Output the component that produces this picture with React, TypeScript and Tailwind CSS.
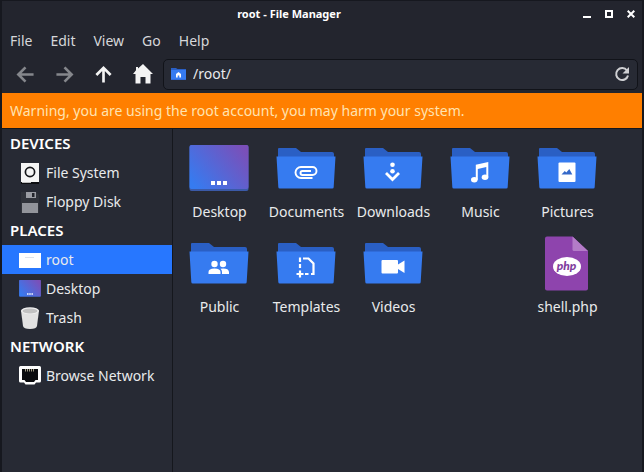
import React from "react";

const menus = ["File", "Edit", "View", "Go", "Help"];

function Folder({ children }: { children: React.ReactNode }) {
  return (
    <svg viewBox="1 0 64 64" className="size-16" aria-hidden="true">
      <path d="M5 12h17l5 4h31q2 0 2 2v10H4V13q0-1 1-1z" fill="#2a5fc4" />
      <path d="M2.500 20.500h59l-1.800 30.500q0 1.500-1.500 1.500H5.800q-1.500 0-1.500-1.500z" fill="#367bf0" />
      {children}
    </svg>
  );
}

function DesktopIcon({ small }: { small?: boolean }) {
  return (
    <svg viewBox={small ? "2 9 60 46" : "1 0 64 64"} className={small ? "h-[17px] w-[22px]" : "size-16"} aria-hidden="true">
      <defs>
        <linearGradient id={small ? "deskSmall" : "deskLarge"} x1="0" y1="0.8" x2="1" y2="0.2">
          <stop offset="0" stopColor="#367bf0" />
          <stop offset="1" stopColor="#7b4fb8" />
        </linearGradient>
      </defs>
      <rect x="2.500" y="9" width="59" height="46" rx="2" fill="#3b5aa8" />
      <rect x="2.500" y="9" width="59" height="44" rx="2" fill={small ? "url(#deskSmall)" : "url(#deskLarge)"} />
      <path d="M24 45h4v4h-4zM30 45h4v4h-4zM36 45h4v4h-4z" fill="#fff" />
    </svg>
  );
}

const DocumentsIcon = () => (
  <Folder>
    <path
      d="M38.500 42H27a5.500 5.500 0 0 1 0-11h11.500a4 4 0 0 1 0 8H28.500a2 2 0 0 1 0-4H37"
      fill="none" stroke="#fff" strokeWidth="1.900"
    />
  </Folder>
);

const DownloadsIcon = () => (
  <Folder>
    <circle cx="31.500" cy="28.800" r="2.300" fill="#fff" />
    <circle cx="31.500" cy="35.300" r="2.300" fill="#fff" />
    <path d="M25 37l6.500 6.500L38 37" fill="none" stroke="#fff" strokeWidth="2.800" />
  </Folder>
);

const MusicIcon = () => (
  <Folder>
    <ellipse cx="26.300" cy="43.700" rx="3.300" ry="2.700" fill="#fff" />
    <ellipse cx="37" cy="41.300" rx="3.300" ry="2.700" fill="#fff" />
    <path d="M27.800 28.700 40.300 26v15.300h-2V31l-8.500 2v10.700h-2z" fill="#fff" />
  </Folder>
);

const PicturesIcon = () => (
  <Folder>
    <rect x="23.500" y="26.500" width="17" height="19.500" rx="1" fill="#fff" />
    <path d="m26.500 38.500 3.300-3.500 1.500 1.500 3-3.500 3 5.500z" fill="#3569c9" />
  </Folder>
);

const PublicIcon = () => (
  <Folder>
    <circle cx="27.500" cy="33" r="3.200" fill="#fff" />
    <circle cx="36" cy="33" r="3.200" fill="#fff" />
    <path d="M21.500 43v-2q0-3.500 6-3.500t6 3.500v2zM35 43v-2q0-2-1.500-3.300 8-1 8.500 3.300v2z" fill="#fff" />
  </Folder>
);

const TemplatesIcon = () => (
  <Folder>
    <path d="M29 27.500h5.500l5 5V43H37" fill="none" stroke="#fff" strokeWidth="2.200" />
    <path d="M26 26.500v4.500M26 33v4M31 43h3.500M22.500 43h7M26 39.500v7" fill="none" stroke="#fff" strokeWidth="2.200" />
  </Folder>
);

const VideosIcon = () => (
  <Folder>
    <path d="M21.500 29q-1 0-1 1v11.500q0 1 1 1H36q1 0 1-1V38l6.500 4V29.500L37 33.500V30q0-1-1-1z" fill="#fff" />
  </Folder>
);

const PhpIcon = () => (
  <svg viewBox="1 0 64 64" className="size-16" aria-hidden="true">
    <path d="M12 5.500h25.500L53 20v37.500q0 2-2 2H12q-2 0-2-2v-50q0-2 2-2z" fill="#8e44ad" />
    <path d="M37.500 5.500 53 20H39q-1.500 0-1.500-1.500z" fill="#b47cc8" />
    <ellipse cx="32" cy="35.500" rx="14" ry="9.500" fill="#fff" />
    <text x="31.500" y="39" textAnchor="middle" fontFamily="Lato, sans-serif" fontSize="12" fontWeight="900" fontStyle="italic" fill="#7f3d9e">php</text>
  </svg>
);

const DriveIcon = () => (
  <svg viewBox="0 0 22 22" className="size-[22px]" aria-hidden="true">
    <path d="M2 1h18v19H2z" fill="#f5f5f5" />
    <circle cx="11" cy="10" r="4.600" fill="none" stroke="#15161a" strokeWidth="1.700" />
    <path d="M2 20h18v2H2z" fill="#0d0e11" />
    <path d="M3 20h9v1H3z" fill="#bbb" />
  </svg>
);

const FloppyIcon = () => (
  <svg viewBox="0 0 22 22" className="size-[22px]" aria-hidden="true">
    <path d="M2 1h15l3 3v18H2z" fill="#30333b" />
    <path d="M7 1h10v6H7z" fill="#9a9ca3" />
    <path d="M13 2h2.500v4H13z" fill="#22242b" />
    <path d="M3 12h16v10H3z" fill="#92949b" />
  </svg>
);

const HomeFolderIcon = () => (
  <svg viewBox="0 0 22 22" className="size-[22px]" aria-hidden="true">
    <path d="M0 4h22v15H0z" fill="#fff" />
    <path d="M6 8.500h9" stroke="#dfe3ea" />
  </svg>
);

const TrashIcon = () => (
  <svg viewBox="0 0 22 22" className="size-[22px]" aria-hidden="true">
    <path d="M2 3.500 4 19q.500 3 7 3t7-3l2-15.500z" fill="#e2e2e2" />
    <ellipse cx="11" cy="3.700" rx="9" ry="3.500" fill="#f0f0f0" />
    <ellipse cx="11" cy="4" rx="7.500" ry="2.400" fill="#c2c2c2" />
  </svg>
);

const NetworkIcon = () => (
  <svg viewBox="0 0 22 22" className="size-[22px]" aria-hidden="true">
    <path d="M1.500 1h19Q22 1 22 2.500V16q0 1.500-1.500 1.500H17l-1.500 2h-9l-1.500-2H1.500Q0 17.500 0 16V2.500Q0 1 1.500 1z" fill="#fff" />
    <path d="M3 4h16v11h-2.500L15 17H7l-1.500-2H3z" fill="#0b0c0f" />
    <path d="M6.500 4v2.500M8.500 4v2.500M10.500 4v2.500M12.500 4v2.500M14.500 4v2.500" stroke="#c9c3a4" strokeWidth=".800" />
  </svg>
);

const files: { name: string; icon: React.ReactNode; place?: string }[] = [
  { name: "Desktop", icon: <DesktopIcon /> },
  { name: "Documents", icon: <DocumentsIcon /> },
  { name: "Downloads", icon: <DownloadsIcon /> },
  { name: "Music", icon: <MusicIcon /> },
  { name: "Pictures", icon: <PicturesIcon /> },
  { name: "Public", icon: <PublicIcon /> },
  { name: "Templates", icon: <TemplatesIcon /> },
  { name: "Videos", icon: <VideosIcon /> },
  { name: "shell.php", icon: <PhpIcon />, place: "col-start-5" },
];

const groups: { title: string; items: { name: string; icon: React.ReactNode }[] }[] = [
  { title: "DEVICES", items: [{ name: "File System", icon: <DriveIcon /> }, { name: "Floppy Disk", icon: <FloppyIcon /> }] },
  {
    title: "PLACES",
    items: [
      { name: "root", icon: <HomeFolderIcon /> },
      { name: "Desktop", icon: <DesktopIcon small /> },
      { name: "Trash", icon: <TrashIcon /> },
    ],
  },
  { title: "NETWORK", items: [{ name: "Browse Network", icon: <NetworkIcon /> }] },
];

function Arrow({ d, label, off }: { d: string; label: string; off?: boolean }) {
  return (
    <button type="button" aria-label={label} disabled={off} className={`flex h-8 w-[39px] items-center justify-center ${off ? "text-[#85878c]" : "text-[#f4f4f4]"}`}>
      <svg viewBox="0 0 20 20" className="size-[19px]" fill="none" stroke="currentColor" strokeWidth="2.800">
        <path d={d} />
      </svg>
    </button>
  );
}

export default function App() {
  return (
    <div className="flex min-h-screen flex-col border-x-2 border-t border-[#16181f] bg-[#23252e] font-['Noto_Sans',sans-serif] text-[14px] leading-5 text-[#e9eaec]">
      <header className="flex h-[26px] items-center">
        <h1 className="flex-1 text-center text-[11px] leading-4 font-bold text-white">root - File Manager</h1>
        {[
          { label: "Minimize", d: "M0 7h8" },
          { label: "Maximize", d: "M1 1h6v6H1z" },
          { label: "Close", d: "M.700.700l6.600 6.600M7.300.700.700 7.300" },
        ].map((b) => (
          <button key={b.label} type="button" aria-label={b.label} className="flex h-6 w-[22px] items-center justify-center">
            <svg viewBox="0 0 8 8" className="size-2" fill="none" stroke="#fff" strokeWidth="2">
              <path d={b.d} />
            </svg>
          </button>
        ))}
      </header>

      <nav className="flex h-7 items-center gap-[18px] px-2">
        {menus.map((m) => (
          <button key={m} type="button" className="text-[#d6d7da]">{m}</button>
        ))}
      </nav>

      <div className="flex h-[38px] items-center px-1">
        <Arrow label="Back" off d="M18.500 10H3M10 2.500 2.500 10l7.500 7.500" />
        <Arrow label="Forward" off d="M1.500 10H17M10 2.500l7.500 7.500-7.500 7.500" />
        <Arrow label="Up" d="M10 18.500V3M2.500 10.500 10 3l7.500 7.500" />
        <button type="button" aria-label="Home" className="flex h-8 w-10 items-center justify-center">
          <svg viewBox="0 0 20 20" className="size-5" fill="#f4f4f4">
            <path d="M10 0 5 4.500V3H3v3.300L0 10h2.500v9.500h5V13h5v6.500h5V10H20z" />
          </svg>
        </button>
        <div className="flex h-[31px] flex-1 items-center gap-[7px] rounded-[5px] border border-[#111319] bg-[#272a34] px-[7px]">
          <svg viewBox="0 0 15 12" className="h-3 w-[15px]" aria-hidden="true">
            <path d="M0 0h5l1.500 1H15v11H0z" fill="#2a5fc4" />
            <path d="M0 2h15v9.500H0z" fill="#367bf0" />
            <path d="M7.500 4 10 6v3.500H8.300v-2H6.700v2H5V6z" fill="#fff" />
          </svg>
          <input aria-label="Location" defaultValue="/root/" className="min-w-0 flex-1 bg-transparent outline-none" />
          <button type="button" aria-label="Reload">
            <svg viewBox="0 0 16 16" className="size-4" fill="none" stroke="#cfd0d3" strokeWidth="2">
              <path d="M13 4.500A6 6 0 1 0 14 9.500" />
              <path d="M15 1v6.500H8.500z" fill="#cfd0d3" stroke="none" />
            </svg>
          </button>
        </div>
      </div>

      <p role="alert" className="flex h-[35px] items-center bg-[#ff7f00] px-2 text-[#ffe3b0]">
        Warning, you are using the root account, you may harm your system.
      </p>

      <div className="flex flex-1 border-t border-[#15171d] bg-[#272a34]">
        <aside className="w-[171px] shrink-0 border-r border-[#15171d]">
          {groups.map((g) => (
            <section key={g.title}>
              <h2 className="flex h-[29px] items-center px-2 pb-0.5 text-[15px] font-semibold text-white">{g.title}</h2>
              <ul>
                {g.items.map((it) => (
                  <li key={it.name}>
                    <button type="button" className={`flex h-[29px] w-full items-center gap-[5px] pl-[17px] ${it.name === "root" ? "bg-[#2777ff]" : ""}`}>
                      {it.icon}
                      {it.name}
                    </button>
                  </li>
                ))}
              </ul>
            </section>
          ))}
        </aside>
        <main className="min-w-0 flex-1 pt-[7px] pl-[3px]">
          <div className="grid grid-cols-[repeat(5,87px)]">
            {files.map((f) => (
              <button key={f.name} type="button" className={`flex h-[95px] flex-col items-center gap-[2px] ${f.place ?? ""}`}>
                {f.icon}
                {f.name}
              </button>
            ))}
          </div>
        </main>
      </div>
    </div>
  );
}
